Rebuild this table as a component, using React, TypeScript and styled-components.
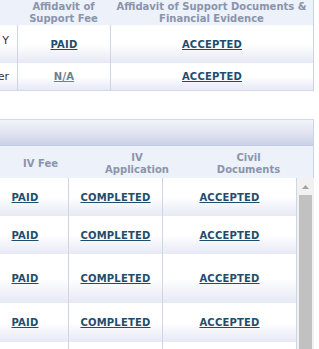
import React from "react";
import styled, { createGlobalStyle } from "styled-components";

const GlobalStyle = createGlobalStyle`
  html, body {
    margin: 0;
    padding: 0;
    background: #ffffff;
  }
  body {
    font-family: "DejaVu Sans", Verdana, sans-serif;
    font-size: 10px;
  }
`;

// the sheet is scrolled sideways, so the first columns sit off to the left
const HIDDEN = 200;

const Viewport = styled.div`
  width: 319px;
  overflow: hidden;
`;

const Sheet = styled.div`
  margin-left: -${HIDDEN}px;
  width: ${HIDDEN + 314}px;
`;

/* ---------- sponsor table ---------- */

const SponsorTable = styled.div`
  width: ${HIDDEN + 313}px;
  border-right: 1px solid #cdd3e7;
  border-bottom: 1px solid #d3d8ea;
`;

const Row = styled.div<{ $h: number }>`
  display: flex;
  height: ${(p) => p.$h}px;
`;

const HeadRow = styled(Row)`
  background: #ecf1fa;
`;

const HeadCell = styled.div<{ $w: number; $pt?: number }>`
  width: ${(p) => p.$w}px;
  flex: none;
  display: flex;
  align-items: center;
  justify-content: center;
  text-align: center;
  padding-top: ${(p) => p.$pt ?? 0}px;
  box-sizing: border-box;
  color: #8b94ab;
  font-weight: bold;
  font-size: 10px;
  line-height: 12px;
`;

const BodyRow = styled(Row)`
  background: linear-gradient(to bottom, #ffffff 0%, #ffffff 50%, #e6e9f5 100%);
`;

const Cell = styled.div<{ $w: number; $sep?: boolean }>`
  width: ${(p) => p.$w}px;
  flex: none;
  display: flex;
  align-items: center;
  justify-content: center;
  box-sizing: border-box;
  border-left: ${(p) => (p.$sep ? "1px solid #cfd5e8" : "none")};
`;

const LabelCell = styled(Cell)<{ $lift?: number }>`
  justify-content: flex-end;
  padding-right: 8px;
  padding-bottom: ${(p) => p.$lift ?? 0}px;
  color: #333333;
  font-size: 11px;
  white-space: nowrap;
  overflow: hidden;
`;

const StatusLink = styled.a<{ $muted?: boolean }>`
  color: ${(p) => (p.$muted ? "#6e7f8f" : "#1f4d6c")};
  font-weight: bold;
  font-size: 10px;
  letter-spacing: 0.2px;
  text-decoration: underline;
  cursor: pointer;
`;

/* ---------- visa section ---------- */

const Gap = styled.div`
  height: 28px;
`;

const Section = styled.div`
  width: ${HIDDEN + 313}px;
  border-right: 1px solid #cdd3e7;
`;

const TitleBar = styled.div`
  height: 25px;
  border-top: 1px solid #d3d8ea;
  border-bottom: 1px solid #c3cbe2;
  background: linear-gradient(to bottom, #f2f4fa 0%, #dfe3f0 55%, #cbd2e7 100%);
  display: flex;
  align-items: center;
  padding-left: 10px;
  color: #2b3b5a;
  font-weight: bold;
  font-size: 11px;
`;

const BodyWrap = styled.div`
  display: flex;
`;

const Rows = styled.div`
  flex: none;
`;

const ScrollTrack = styled.div`
  width: 17px;
  flex: none;
  border-left: 1px solid #cfd5e8;
  background: #f1f1f1;
  display: flex;
  flex-direction: column;
  align-items: center;
`;

const ArrowUp = styled.div`
  height: 17px;
  display: flex;
  align-items: center;
  justify-content: center;
  svg {
    display: block;
  }
`;

const Thumb = styled.div`
  width: 13px;
  flex: 1;
  background: #c1c1c1;
`;

const sponsors = [
  { label: "Sponsor Class Y", fee: "PAID", docs: "ACCEPTED", h: 38, lift: 8 },
  { label: "Household Member", fee: "N/A", docs: "ACCEPTED", h: 27, lift: 0 },
];

const applicants = [38, 38, 49, 39, 39];

export default function App() {
  return (
    <>
      <GlobalStyle />
      <Viewport>
        <Sheet>
          <SponsorTable>
            <HeadRow $h={25}>
              <HeadCell $w={HIDDEN + 17}>Sponsor</HeadCell>
              <HeadCell $w={93}>
                Affidavit of
                <br />
                Support Fee
              </HeadCell>
              <HeadCell $w={203}>
                Affidavit of Support Documents &amp;
                <br />
                Financial Evidence
              </HeadCell>
            </HeadRow>
            {sponsors.map((s) => (
              <BodyRow $h={s.h} key={s.label}>
                <LabelCell $w={HIDDEN + 17} $lift={s.lift}>
                  {s.label}
                </LabelCell>
                <Cell $w={93} $sep>
                  <StatusLink $muted={s.fee === "N/A"}>{s.fee}</StatusLink>
                </Cell>
                <Cell $w={203} $sep>
                  <StatusLink>{s.docs}</StatusLink>
                </Cell>
              </BodyRow>
            ))}
          </SponsorTable>

          <Gap />

          <Section>
            <TitleBar>Immigrant Visa Applicants</TitleBar>
            <HeadRow $h={32}>
              <HeadCell $w={HIDDEN - 9}>Applicant</HeadCell>
              <HeadCell $w={99} $pt={3}>IV Fee</HeadCell>
              <HeadCell $w={94} $pt={3}>
                IV
                <br />
                Application
              </HeadCell>
              <HeadCell $w={129} $pt={3}>
                Civil
                <br />
                Documents
              </HeadCell>
            </HeadRow>
            <BodyWrap>
              <Rows>
                {applicants.map((h, i) => (
                  <BodyRow $h={h} key={i}>
                    <Cell $w={HIDDEN - 18} />
                    <Cell $w={86}>
                      <StatusLink>PAID</StatusLink>
                    </Cell>
                    <Cell $w={94} $sep>
                      <StatusLink>COMPLETED</StatusLink>
                    </Cell>
                    <Cell $w={134} $sep>
                      <StatusLink>ACCEPTED</StatusLink>
                    </Cell>
                  </BodyRow>
                ))}
              </Rows>
              <ScrollTrack>
                <ArrowUp>
                  <svg width="7" height="4" viewBox="0 0 7 4">
                    <path d="M0 4 L3.5 0 L7 4 Z" fill="#a3a3a3" />
                  </svg>
                </ArrowUp>
                <Thumb />
              </ScrollTrack>
            </BodyWrap>
          </Section>
        </Sheet>
      </Viewport>
    </>
  );
}
